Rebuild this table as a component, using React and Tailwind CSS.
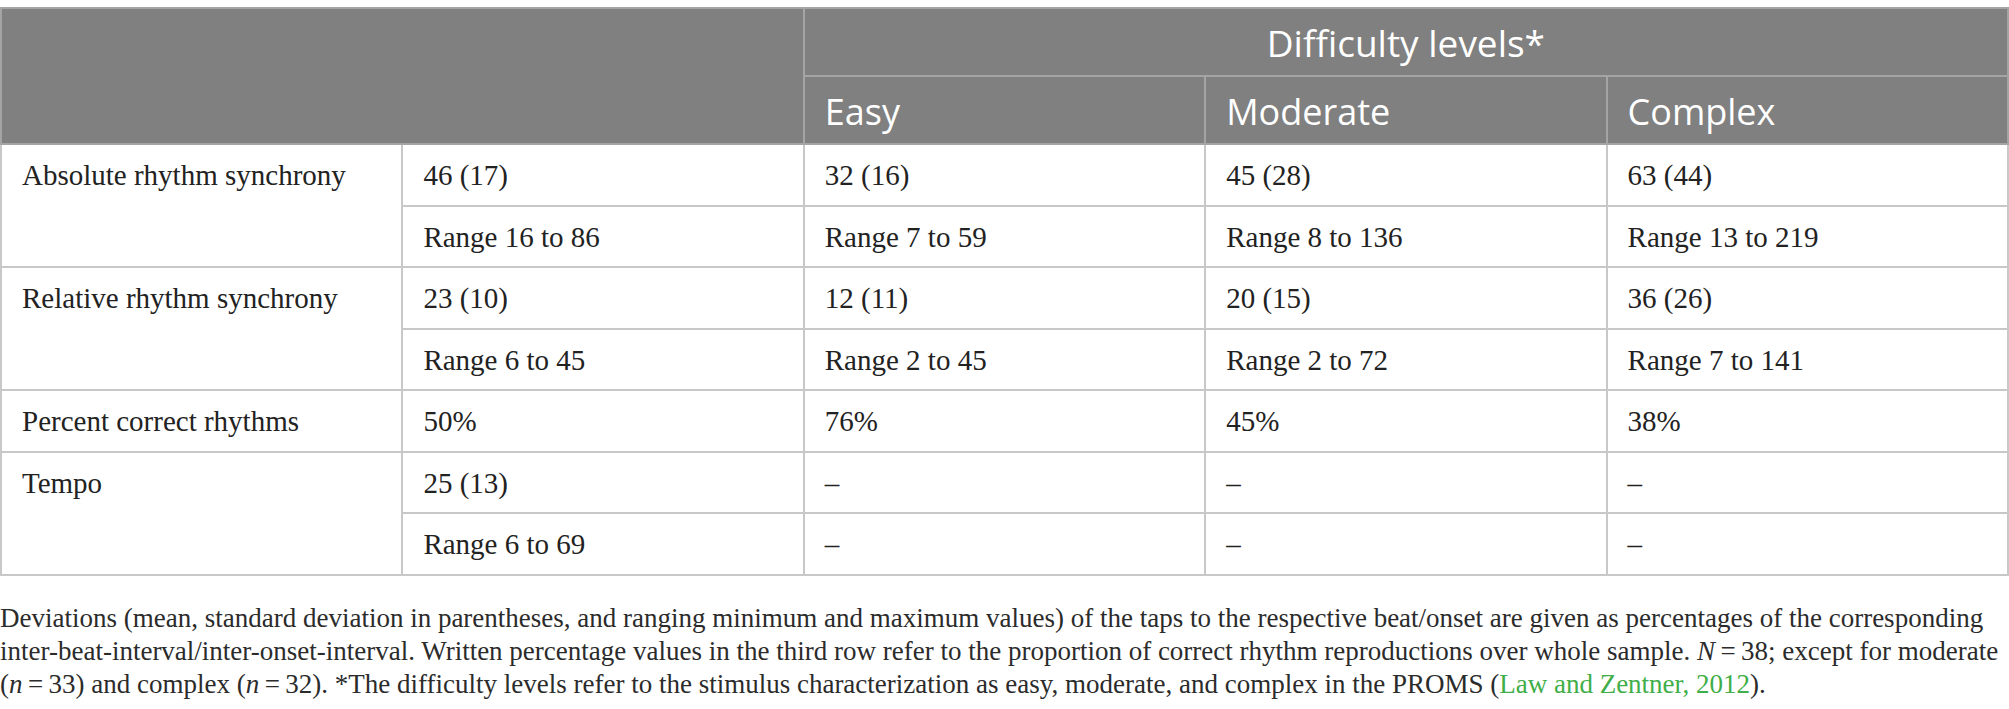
import React from 'react';

const rows = [
  { label: 'Absolute rhythm synchrony', lines: [['46 (17)', '32 (16)', '45 (28)', '63 (44)'], ['Range 16 to 86', 'Range 7 to 59', 'Range 8 to 136', 'Range 13 to 219']] },
  { label: 'Relative rhythm synchrony', lines: [['23 (10)', '12 (11)', '20 (15)', '36 (26)'], ['Range 6 to 45', 'Range 2 to 45', 'Range 2 to 72', 'Range 7 to 141']] },
  { label: 'Percent correct rhythms', lines: [['50%', '76%', '45%', '38%']] },
  { label: 'Tempo', lines: [['25 (13)', '–', '–', '–'], ['Range 6 to 69', '–', '–', '–']] },
];

const serif = { fontFamily: '"Liberation Serif", "Times New Roman", serif' };

export default function App() {
  return (
    <div className="bg-white pt-[7px] w-[2009px]">
      {/* Table */}
      <table className="w-full table-fixed border-collapse border-2 border-[#c8c8c8]">
        <colgroup>
          <col className="w-1/5" />
          <col className="w-1/5" />
          <col className="w-1/5" />
          <col className="w-1/5" />
          <col className="w-1/5" />
        </colgroup>
        <thead className="bg-[#808080] text-white text-[36px] font-['Open_Sans',sans-serif]">
          <tr className="h-[68px]">
            <th colSpan={2} rowSpan={2} className="border-2 border-[#a4a4a4]" />
            <th colSpan={3} className="border-2 border-[#a4a4a4] font-normal text-center align-middle text-[37px] pt-[2px]">Difficulty levels*</th>
          </tr>
          <tr className="h-[68px]">
            <th className="border-2 border-[#a4a4a4] font-normal text-left align-middle px-[20px] pt-[3px]">Easy</th>
            <th className="border-2 border-[#a4a4a4] font-normal text-left align-middle px-[20px] pt-[3px]">Moderate</th>
            <th className="border-2 border-[#a4a4a4] font-normal text-left align-middle px-[20px] pt-[3px]">Complex</th>
          </tr>
        </thead>
        <tbody className="text-[29px] leading-[31px] text-[#222]" style={serif}>
          {rows.map((r) =>
            r.lines.map((line, i) => (
              <tr key={r.label + i} className="h-[61.5px]">
                {i === 0 && (
                  <td rowSpan={r.lines.length} className="border-2 border-[#c8c8c8] align-top px-[20px] pt-[15px]">
                    {r.label}
                  </td>
                )}
                {line.map((v, j) => (
                  <td key={j} className="border-2 border-[#c8c8c8] align-top px-[20px] pt-[15px]">
                    {v}
                  </td>
                ))}
              </tr>
            ))
          )}
        </tbody>
      </table>

      {/* Footnote */}
      <div className="mt-[26px] text-[27px] leading-[33px] text-[#2b2b2b]" style={serif}>
        <div className="whitespace-nowrap">
          Deviations (mean, standard deviation in parentheses, and ranging minimum and maximum values) of the taps to the respective beat/onset are given as percentages of the corresponding
        </div>
        <div className="whitespace-nowrap">
          inter-beat-interval/inter-onset-interval. Written percentage values in the third row refer to the proportion of correct rhythm reproductions over whole sample. <i>N</i>{'\u2009=\u2009'}38; except for moderate
        </div>
        <div className="whitespace-nowrap">
          (<i>n</i>{'\u2009=\u2009'}33) and complex (<i>n</i>{'\u2009=\u2009'}32). *The difficulty levels refer to the stimulus characterization as easy, moderate, and complex in the PROMS (<span className="text-[#3fae49]">Law and Zentner, 2012</span>).
        </div>
      </div>
    </div>
  );
}
